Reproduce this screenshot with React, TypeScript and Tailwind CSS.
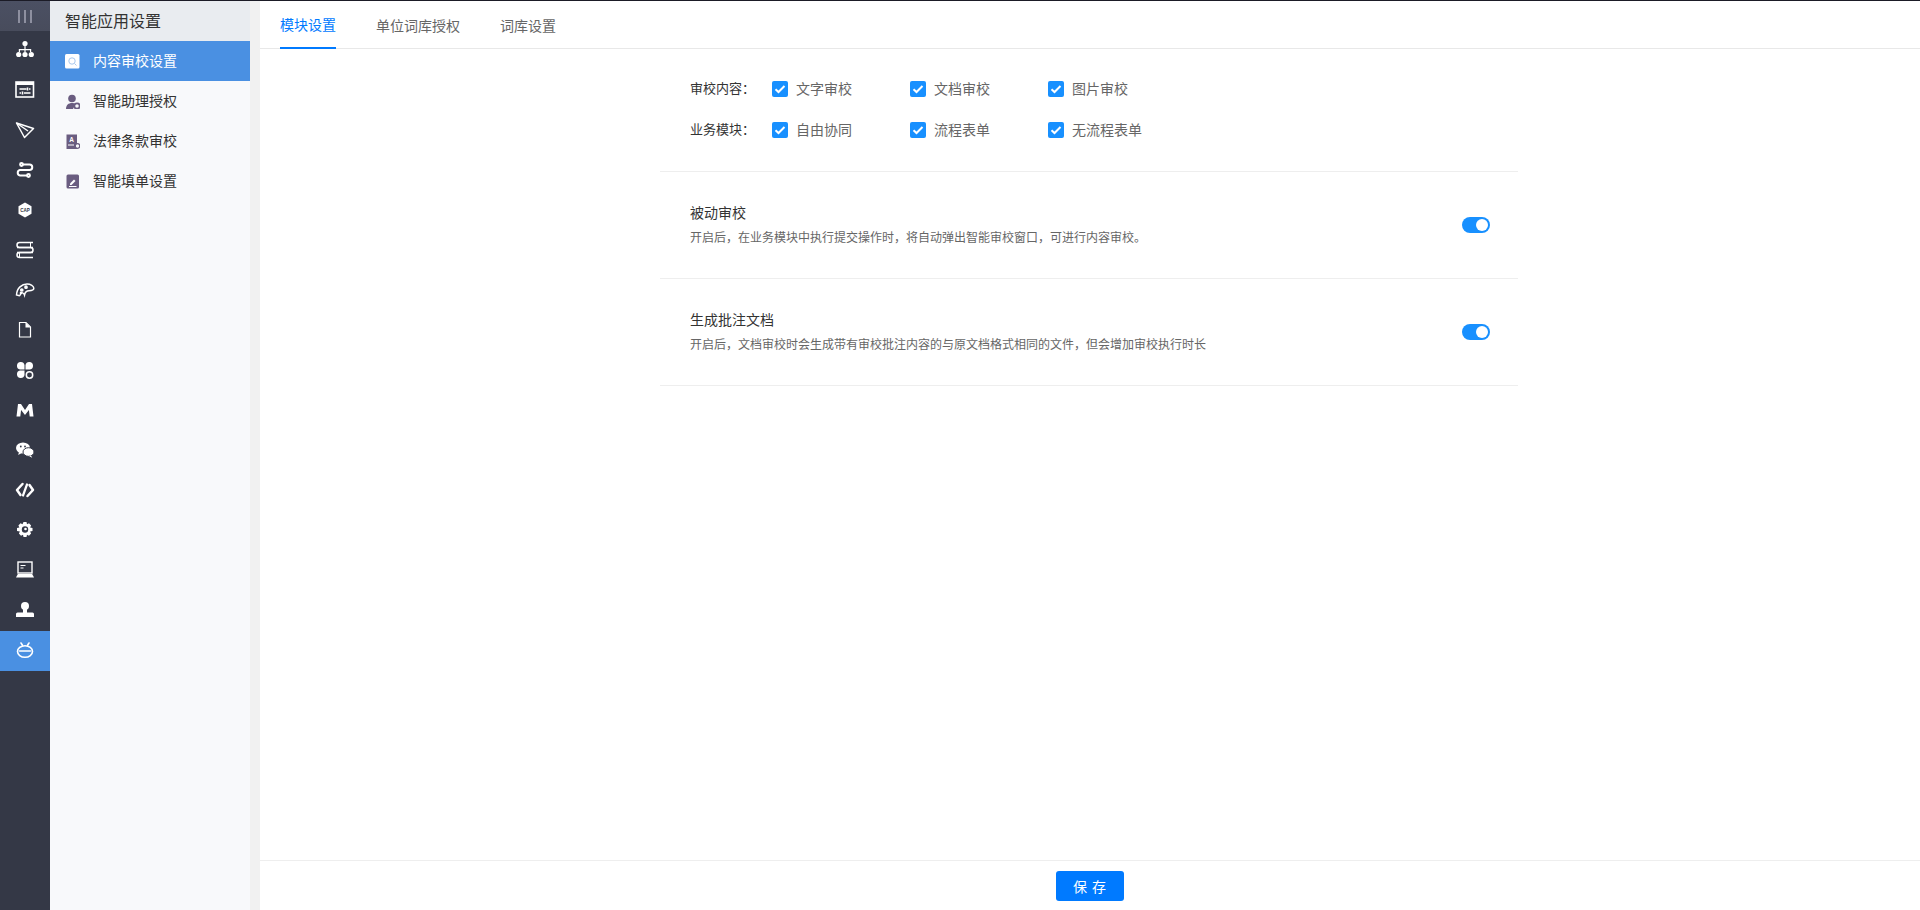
import * as React from 'react';

const FONT = "font-['Noto_Sans_CJK_SC','Liberation_Sans',sans-serif]";

const railIcons: React.ReactNode[] = [
  // org tree
  <g key="org" fill="#fff">
    <circle cx="10" cy="3.500" r="2.600" />
    <path d="M9.400 5.500h1.200v3.500h5.600v3h-1.200v-1.800h-4.400V12H9.400v-1.800H5V12H3.800V9h5.600z" />
    <circle cx="3.700" cy="14.500" r="2.600" />
    <circle cx="10" cy="14.500" r="2.600" />
    <circle cx="16.300" cy="14.500" r="2.600" />
  </g>,
  // sliders box
  <g key="sliders">
    <rect x="1" y="2" width="17.500" height="15" fill="none" stroke="#fff" strokeWidth="1.600" />
    <rect x="1" y="2" width="17.500" height="3" fill="#fff" />
    <path d="M4.500 9h7M14 9h1.500M4.500 13h1.500M9 13h6.500" stroke="#fff" strokeWidth="1.300" />
    <path d="M12.500 7.500v3M7.500 11.500v3" stroke="#fff" strokeWidth="1.600" />
  </g>,
  // send arrow
  <g key="send" fill="none" stroke="#fff" strokeWidth="1.500" strokeLinejoin="round">
    <path d="M1.500 3l17 5.500L9.500 17.500z" />
    <path d="M1.500 3L13 11" />
  </g>,
  // route
  <g key="route" fill="none" stroke="#fff" strokeWidth="2" strokeLinecap="round">
    <path d="M8 4.500h6.500a2.700 2.700 0 0 1 0 5.500H5a2.800 2.800 0 0 0 0 5.500h7" />
    <circle cx="6.500" cy="4.500" r="1.400" />
    <circle cx="13.500" cy="15.500" r="1.400" />
  </g>,
  // CAP hexagon
  <g key="cap">
    <path d="M10 2.500l6.500 3.700v7.600L10 17.500l-6.500-3.700V6.200z" fill="#fff" />
    <text x="10" y="11.800" textAnchor="middle" fontSize="4.600" fontWeight="700" fill="#343846" fontFamily="Liberation Sans">CAP</text>
  </g>,
  // stack
  <g key="stack" fill="none" stroke="#fff" strokeWidth="1.500">
    <path d="M18 2.500H4.500a2.400 2.400 0 0 0 0 5H18" />
    <path d="M2 7.500h13.500a2.500 2.500 0 0 1 0 5H2" />
    <path d="M18 12.500H4.500a2.400 2.400 0 0 0 0 5H18" />
    <path d="M15.500 2.500v5M4.500 12.500v5" strokeWidth="1" />
  </g>,
  // palette
  <g key="palette" fill="none" stroke="#fff" strokeWidth="1.500">
    <path d="M1.500 15C1.800 8 7 4 12 4c3.800 0 6.800 2 6.800 4.300 0 2-2.200 2.400-4.800 2.400-3.300 0-4 1.500-4.500 4.300-.8-2.200-3-3-3.800-1.200-.4.9-.8 2-1.200 2z" />
    <circle cx="6.800" cy="10" r="1.100" fill="#fff" />
    <circle cx="11" cy="7.200" r="1.100" fill="#fff" />
    <circle cx="6" cy="13" r=".6" fill="#fff" />
  </g>,
  // file
  <g key="file">
    <path d="M4.500 2.500h6.500l4.500 4.500V17H4.500z" fill="none" stroke="#fff" strokeWidth="1.200" />
    <path d="M10.500 2.500v5h5z" fill="#fff" />
  </g>,
  // clover
  <g key="clover" fill="#fff">
    <path d="M9.500 9.500H5A3.800 3.800 0 1 1 9.500 5z" />
    <path d="M10.500 9.500H15A3.800 3.800 0 1 0 10.500 5z" />
    <path d="M9.500 10.500H5A3.800 3.800 0 1 0 9.500 15z" />
    <circle cx="14.500" cy="15" r="3.200" fill="none" stroke="#fff" strokeWidth="1.500" />
  </g>,
  // M logo
  <path key="m" d="M1.500 16.500L3 4h3l4 6 4-6h3l1.500 12.500h-3.800l-.8-6.500L10 15l-3.900-5-.8 6.500z" fill="#fff" />,
  // wechat
  <g key="wechat" fill="#fff">
    <ellipse cx="8" cy="8" rx="7" ry="5.500" />
    <path d="M4 12l-.8 3 3.500-2z" />
    <ellipse cx="13.500" cy="12" rx="5.500" ry="4.300" stroke="#343846" strokeWidth="1" />
    <path d="M16 15.500l1.200 2.300-3-1.500z" />
    <circle cx="5.800" cy="6.500" r=".9" fill="#343846" />
    <circle cx="10" cy="6.500" r=".9" fill="#343846" />
  </g>,
  // code
  <g key="code" fill="none" stroke="#fff" strokeWidth="2.500" strokeLinejoin="round" strokeLinecap="round">
    <path d="M7.500 4L2 10l3.500 5" />
    <path d="M14.500 5L18 10l-5.500 6" />
    <path d="M12 4.500L8 15.500" strokeWidth="2.200" />
  </g>,
  // gear
  <g key="gear">
    <path d="M8.500 2h3l.5 2.200 2-.9 2.100 2.100-1 2 2.400.6v3l-2.400.6 1 2-2.100 2.100-2-1-.5 2.300h-3l-.5-2.300-2 1-2.100-2.100 1-2L2 11V8l2.400-.6-1-2 2.100-2.100 2 .9z" fill="#fff" />
    <circle cx="10" cy="9.500" r="3.200" fill="#343846" />
    <circle cx="10.500" cy="9" r="1.300" fill="#fff" />
  </g>,
  // laptop
  <g key="laptop">
    <rect x="3" y="2" width="14" height="11" fill="none" stroke="#fff" strokeWidth="1.400" />
    <path d="M5.500 5.500h5M5.500 8h3" stroke="#fff" strokeWidth="1.200" />
    <path d="M2.800 14h14.400l1.800 3.500H1z" fill="#fff" />
  </g>,
  // stamp user
  <g key="stamp" fill="#fff">
    <circle cx="10" cy="6" r="4" />
    <path d="M8 9h4v3.500h5.500a1.500 1.500 0 0 1 1.500 1.500v3H1v-3a1.500 1.500 0 0 1 1.500-1.500H8z" />
  </g>,
  // robot
  <g key="robot" fill="none" stroke="#fff" strokeWidth="1.600" strokeLinecap="round">
    <ellipse cx="10" cy="11.500" rx="7.500" ry="5.800" />
    <path d="M4.500 11h11" />
    <path d="M6 3l1.500 2.200M14 3l-1.500 2.200" />
  </g>,
];

const navItems = [
  {
    label: '智能助理授权',
    icon: (
      <g fill="#6a5d80">
        <circle cx="7" cy="4.500" r="3.800" />
        <path d="M1 15c0-4 2.500-6 6-6 1.500 0 2.500.3 3.500 1L8 15z" />
        <circle cx="12" cy="12" r="2.700" fill="none" stroke="#6a5d80" strokeWidth="1.800" />
      </g>
    ),
  },
  {
    label: '法律条款审校',
    icon: (
      <g>
        <rect x="1.500" y="0.500" width="10.500" height="14.500" fill="#6a5d80" />
        <text x="6.700" y="7.500" textAnchor="middle" fontSize="6.500" fontWeight="700" fill="#fff" fontFamily="Liberation Sans">A</text>
        <path d="M3 11h6" stroke="#fff" strokeWidth="1" />
        <circle cx="12.500" cy="12" r="2.300" fill="#f8f9fb" stroke="#6a5d80" strokeWidth="1.300" />
      </g>
    ),
  },
  {
    label: '智能填单设置',
    icon: (
      <g>
        <rect x="1.500" y="0.500" width="12.500" height="14" rx="1.500" fill="#6a5d80" />
        <path d="M5 9.500l4-4 1.500 1.500-4 4H5z" fill="#fff" />
        <path d="M4 12.500h7.500" stroke="#fff" strokeWidth="1" />
      </g>
    ),
  },
];

const checkRows = [
  { title: '审校内容：', items: ['文字审校', '文档审校', '图片审校'] },
  { title: '业务模块：', items: ['自由协同', '流程表单', '无流程表单'] },
];

const switches = [
  { title: '被动审校', desc: '开启后，在业务模块中执行提交操作时，将自动弹出智能审校窗口，可进行内容审校。' },
  { title: '生成批注文档', desc: '开启后，文档审校时会生成带有审校批注内容的与原文档格式相同的文件，但会增加审校执行时长' },
];

const Checkbox = ({ label }: { label: string }) => (
  <div className="flex w-[138px] items-center">
    <span className="flex h-4 w-4 items-center justify-center rounded-[2px] bg-[#1890ff]">
      <svg width="12" height="12" viewBox="0 0 12 12" fill="none" stroke="#fff" strokeWidth="2">
        <path d="M1.500 6.200l3 2.800L10.500 3" />
      </svg>
    </span>
    <span className="mb-[2px] ml-[8px] text-sm leading-5 text-[#666]">{label}</span>
  </div>
);

const App = () => {
  return (
    <div className={`flex h-screen flex-col overflow-hidden bg-white ${FONT}`}>
      <div className="h-px shrink-0 bg-[#1b1b26]" />
      <div className="flex min-h-0 flex-1">
        <aside className="flex w-[50px] shrink-0 flex-col bg-[#343846]">
          <div className="flex h-[30px] items-center justify-center bg-gradient-to-b from-[#4b5063] to-[#484c5c]">
            <div className="flex gap-1">
              <span className="h-[13px] w-0.5 bg-[#8e90a0]" />
              <span className="h-[13px] w-0.5 bg-[#8e90a0]" />
              <span className="h-[13px] w-0.5 bg-[#8e90a0]" />
            </div>
          </div>
          {railIcons.map((icon, i) => (
            <div
              key={i}
              className={`flex h-10 items-center justify-center pb-[2px] ${i === railIcons.length - 1 ? 'bg-[#4a90e2]' : ''}`}
            >
              <svg width="20" height="20" viewBox="0 0 20 20">
                {icon}
              </svg>
            </div>
          ))}
        </aside>

        <nav className="w-[200px] shrink-0 bg-[#f8f9fb]">
          <div className="flex h-10 items-center bg-[#e9ecf0] pb-[2px] pl-[15px] text-base text-[#333]">智能应用设置</div>
          <div className="flex h-10 items-center bg-[#4a90e2] pl-[15px] text-sm text-white">
            <svg width="15" height="15" viewBox="0 0 15 15">
              <rect width="14.500" height="14.500" rx="1.500" fill="#fff" />
              <circle cx="7" cy="7" r="3.200" fill="none" stroke="#a9c8ee" strokeWidth="1" />
              <path d="M9.500 9.500l2 2" stroke="#a9c8ee" strokeWidth="1" />
            </svg>
            <span className="mb-[2px] ml-[13px]">内容审校设置</span>
          </div>
          {navItems.map((item) => (
            <div key={item.label} className="flex h-10 items-center pl-[15px] text-sm text-[#333]">
              <svg width="15" height="15" viewBox="0 0 15 15">
                {item.icon}
              </svg>
              <span className="mb-[2px] ml-[13px]">{item.label}</span>
            </div>
          ))}
        </nav>

        <div className="w-[10px] shrink-0 bg-[#f1f1f1]" />

        <main className="flex min-w-0 flex-1 flex-col">
          <div className="flex h-[48px] shrink-0 gap-10 border-b border-[#e8e8e8] pl-5">
            <div className="flex h-[48px] items-center border-b-2 border-[#007aff] text-sm text-[#007aff]">模块设置</div>
            <div className="flex h-[47px] items-center text-sm text-[#666]">单位词库授权</div>
            <div className="flex h-[47px] items-center text-sm text-[#666]">词库设置</div>
          </div>

          <div className="flex-1 overflow-hidden">
            <div className="mx-auto w-[860px] pr-[2px]">
              <section className="flex flex-col gap-px border-b border-[#eee] pb-[21px] pl-[30px] pt-5">
                {checkRows.map((row) => (
                  <div key={row.title} className="flex h-10 items-center">
                    <span className="mb-[2px] w-[82px] text-[13px] leading-5 text-[#333]">{row.title}</span>
                    {row.items.map((label) => (
                      <Checkbox key={label} label={label} />
                    ))}
                  </div>
                ))}
              </section>
              {switches.map((item) => (
                <section key={item.title} className="flex h-[107px] items-center justify-between border-b border-[#eee] pl-[30px] pr-[28px]">
                  <div className="mb-[2px]">
                    <div className="text-sm leading-5 text-[#333]">{item.title}</div>
                    <div className="mt-[5px] text-xs leading-5 text-[#666]">{item.desc}</div>
                  </div>
                  <span className="flex h-4 w-7 items-center justify-end rounded-full bg-[#1890ff] pr-[2px]">
                    <span className="h-3 w-3 rounded-full bg-white" />
                  </span>
                </section>
              ))}
            </div>
          </div>

          <div className="flex h-[50px] shrink-0 items-center justify-center border-t border-[#eee]">
            <button className="h-[30px] w-[68px] rounded-[3px] bg-[#007aff] text-sm tracking-[1px] text-white">保 存</button>
          </div>
        </main>
      </div>
    </div>
  );
};

export default App;
